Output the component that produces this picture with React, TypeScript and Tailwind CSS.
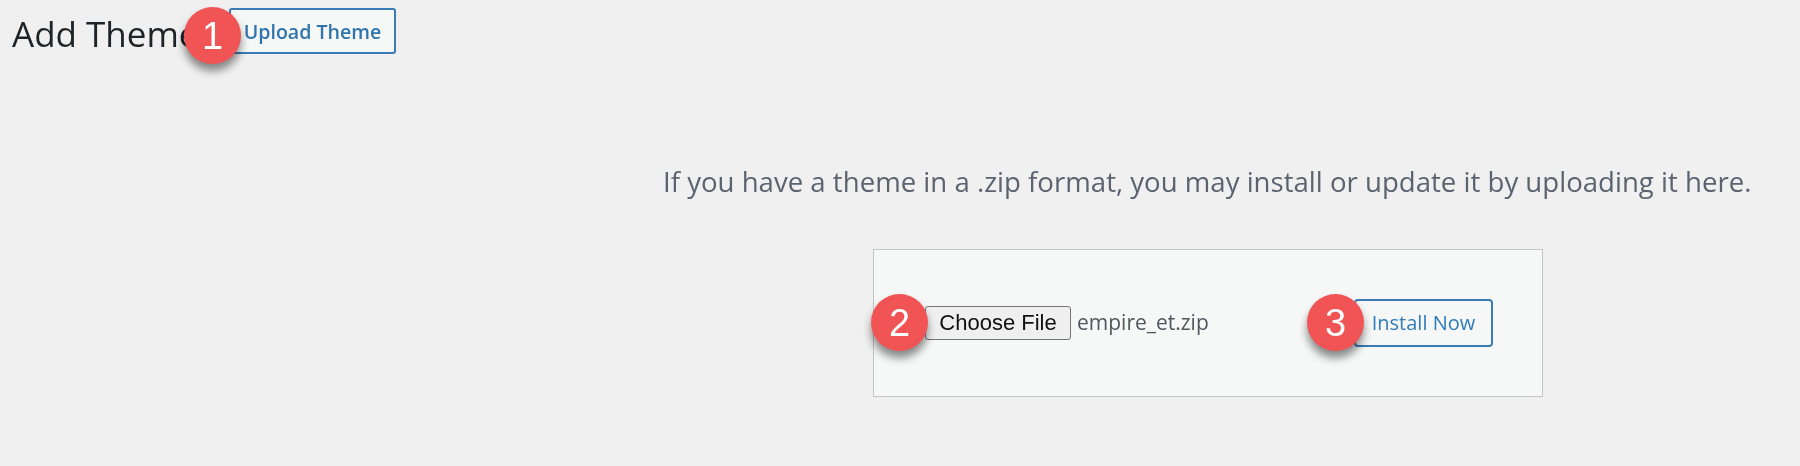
const sans = "font-['Open_Sans','Noto_Sans',sans-serif]";

function Badge({ n, className }: { n: number; className: string }) {
  return (
    <span
      className={`absolute flex h-[57px] w-[57px] items-center justify-center rounded-full bg-[#f05454] font-['Liberation_Sans',sans-serif] text-[38px] leading-none text-white shadow-[0_7px_9px_rgba(0,0,0,0.45)] ${className}`}
    >
      {n}
    </span>
  );
}

export default function App() {
  return (
    <div className={`h-[466px] w-[1800px] overflow-hidden bg-[#f0f0f0] blur-[0.4px] ${sans}`}>
      <div className="flex items-start pl-3 pt-2">
        <h1 className="mt-[6px] w-[217px] text-[35px] leading-[40px] font-normal whitespace-nowrap text-[#1d2327]">Add Theme</h1>
        <div className="relative">
          <button className="h-[46px] w-[167px] rounded-[3px] border-2 border-[#3a7bb5] bg-[#f6f7f7] pt-[1px] text-[19.6px] font-semibold whitespace-nowrap text-[#2f74ad]">
            Upload Theme
          </button>
          <Badge n={1} className="left-[-45px] top-[-1px]" />
        </div>
      </div>
      <p className="mt-[109px] ml-[663px] text-[27.6px] leading-[36px] whitespace-nowrap text-[#5c6370]">
        If you have a theme in a .zip format, you may install or update it by uploading it here.
      </p>
      <div className="mt-[50px] ml-[873px] flex h-[148px] w-[670px] items-center border border-[#c3c4c7] bg-[#f6f7f7] pl-[51px]">
        <div className="relative">
          <button className="h-[34px] w-[146px] rounded-[3px] border border-[#767676] bg-[#efefef] font-['Liberation_Sans',sans-serif] text-[22px] leading-none text-[#111]">
            Choose File
          </button>
          <Badge n={2} className="left-[-54px] top-[-12px]" />
        </div>
        <span className="ml-[6px] w-[277px] text-[21px] text-[#50575e]">empire_et.zip</span>
        <div className="relative">
          <button className="h-[48px] w-[139px] rounded-[4px] border-2 border-[#3a7bb5] bg-[#f6f7f7] text-[20px] text-[#2f7cb8]">
            Install Now
          </button>
          <Badge n={3} className="left-[-47px] top-[-5px]" />
        </div>
      </div>
    </div>
  );
}
